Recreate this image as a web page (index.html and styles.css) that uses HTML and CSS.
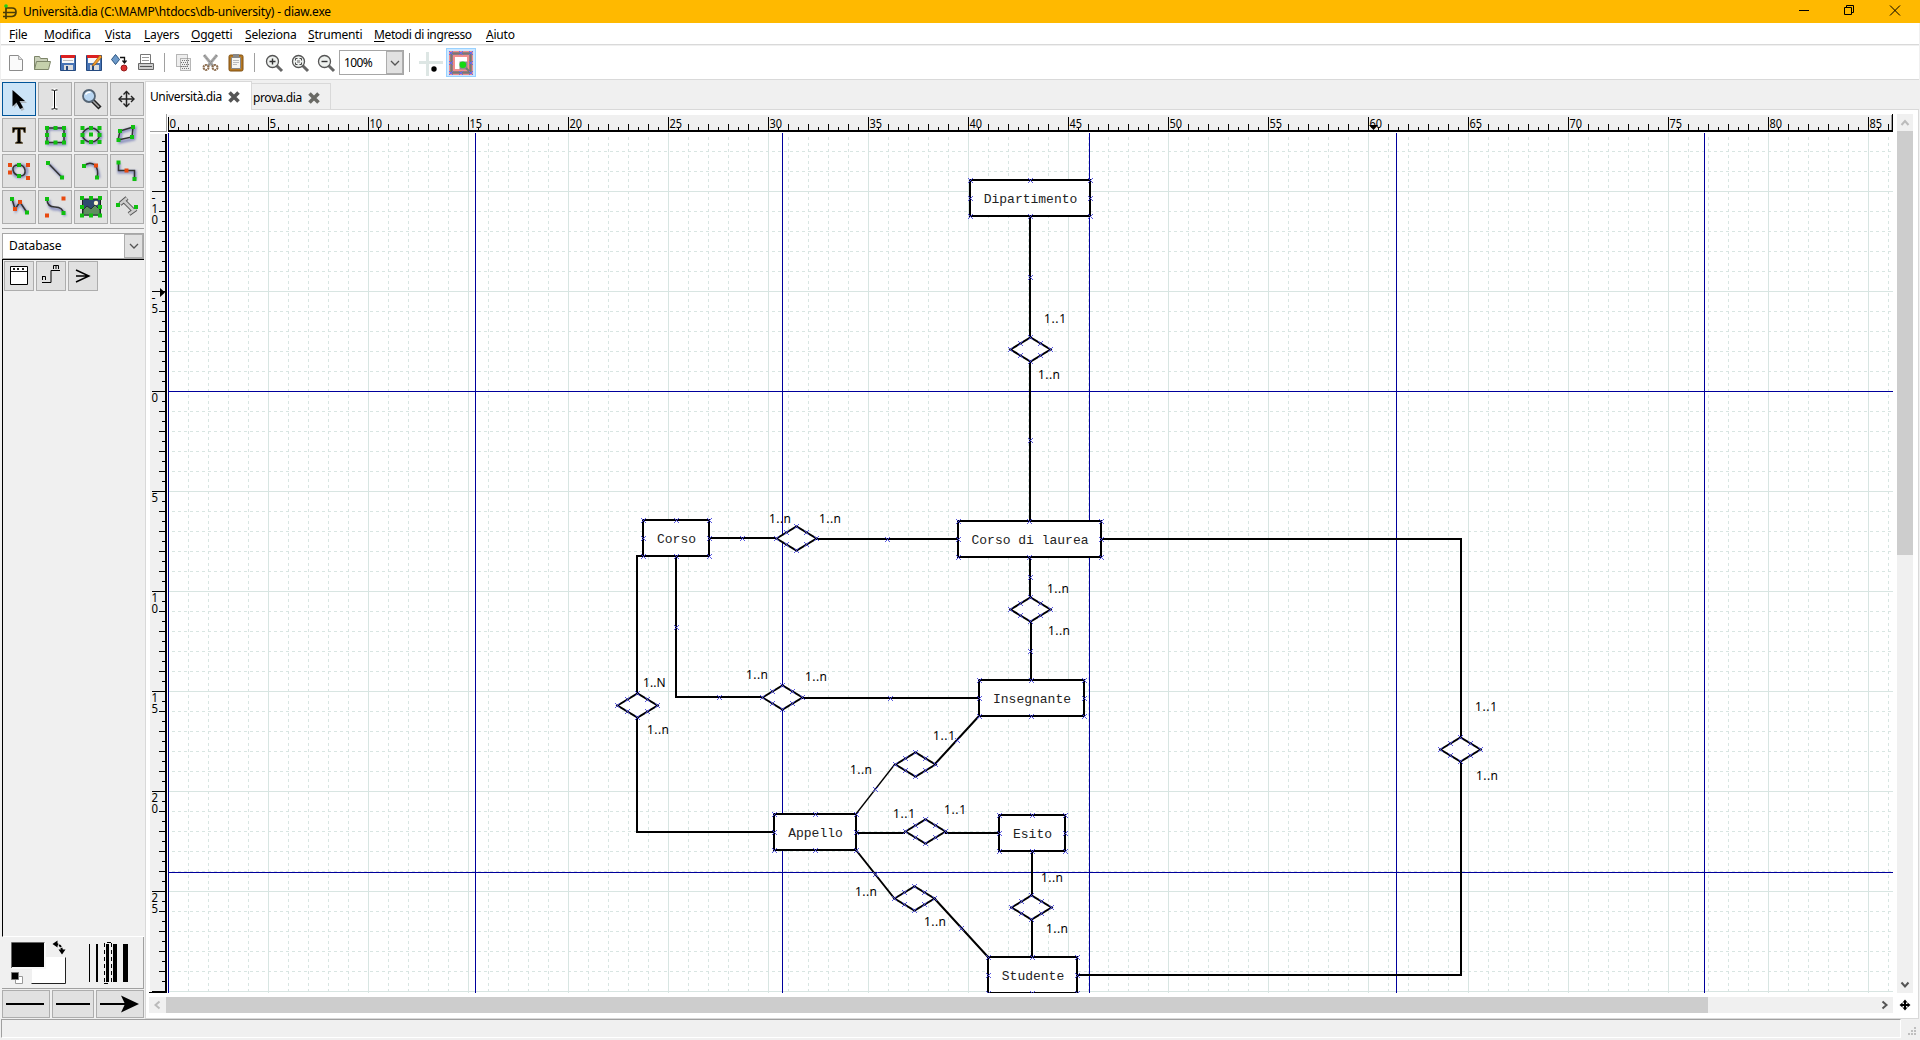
FILE: index.html
```
<!DOCTYPE html>
<html lang="it">
<head>
<meta charset="utf-8">
<title>Università.dia - diaw.exe</title>
<link rel="stylesheet" href="styles.css">
</head>
<body>
<header class="titlebar">
  <svg class="app-icon" width="16" height="16" viewBox="0 0 16 16"><path d="M4 3v12M1 12.500h9q4-.5 4-4.500t-4-4H4M1 8.500h13" fill="none" stroke="#4a3c06" stroke-width="1.700"/><circle cx="4" cy="2" r="1.800" fill="#1bd01b"/></svg>
  <span class="title-text">Università.dia (C:\MAMP\htdocs\db-university) - diaw.exe</span>
  <svg class="win-buttons" width="110" height="23" viewBox="1796 0 110 23" fill="none" stroke="#000"><path d="M1799 10.500h10M1844.500 7.500h7v7h-7zM1846.500 7v-1.500h7v7h-1.500M1890 5.500l10 10M1900 5.500l-10 10"/></svg>
</header>

<nav class="menubar">
  <span class="m-file"><u>F</u>ile</span><span class="m-mod"><u>M</u>odifica</span><span class="m-vista"><u>V</u>ista</span><span class="m-layers"><u>L</u>ayers</span><span class="m-ogg"><u>O</u>ggetti</span><span class="m-sel"><u>S</u>eleziona</span><span class="m-str"><u>S</u>trumenti</span><span class="m-met"><u>M</u>etodi di ingresso</span><span><u>A</u>iuto</span>
</nav>

<div class="toolbar">
  <svg class="tb" viewBox="0 0 26 26"><path d="M6.500 5.500h9l4 4v11h-13z" fill="#fafafa" stroke="#8c8c8c"/><path d="M15.500 5.500v4h4" fill="#ddd" stroke="#aaa"/></svg>
  <svg class="tb" viewBox="0 0 26 26"><path d="M5.500 19.500v-13h5l1 2h7v4" fill="#c8cfb8" stroke="#7d8569"/><path d="M5.500 19.500l2-8h14l-2 8z" fill="#c5d0ac" stroke="#7d8569"/></svg>
  <svg class="tb" viewBox="0 0 26 26"><path d="M5.500 5.500h15v15h-15z" fill="#4774b5" stroke="#24497f"/><path d="M6 5h14v3H6z" fill="#dc2020"/><path d="M7 8h12v5H7z" fill="#f8f8f8"/><path d="M8 10.500h10" stroke="#bbb"/><path d="M9 15h9v5H9z" fill="#ddd"/><path d="M11 16h2v4h-2z" fill="#24497f"/></svg>
  <svg class="tb" viewBox="0 0 26 26"><path d="M5.500 5.500h15v15h-15z" fill="#4774b5" stroke="#24497f"/><path d="M6 5h14v3H6z" fill="#dc2020"/><path d="M7 8h12v5H7z" fill="#f8f8f8"/><path d="M9 15h9v5H9z" fill="#ddd"/><path d="M11 16h2v4h-2z" fill="#24497f"/><path d="M12 14l7-9 2 2-7 8-3 1z" fill="#f39b28" stroke="#8a5518" stroke-width=".7"/></svg>
  <svg class="tb" viewBox="0 0 26 26"><path d="M8.500 4.500l4 5-4 5-4-5z" fill="#6c99c9" stroke="#28527f"/><path d="M13 7.500h4.500V12M15.500 10.500l2 2.500 2-2.500" fill="none" stroke="#111" stroke-width="1.300"/><circle cx="17" cy="18" r="3" fill="#dc3030" stroke="#961c1c"/></svg>
  <svg class="tb" viewBox="0 0 26 26"><path d="M7.500 4.500h10v9h-10z" fill="#fff" stroke="#777"/><path d="M9 7.500h7M9 10.500h7" stroke="#999"/><path d="M5.500 13.500h15v6h-15z" fill="#ccc" stroke="#666"/><path d="M7 16.500h12" stroke="#555"/></svg>
  <i class="sep"></i>
  <svg class="tb" viewBox="0 0 26 26"><g fill="#eee" stroke="#777" stroke-dasharray="1 1"><path d="M5.500 4.500h11v12h-11zM9.500 8.500h10v12h-10z"/><path d="M11 10.500h8M10 12.500h8M11 14.500h8M10 16.500h8M11 18.500h8"/></g></svg>
  <svg class="tb" viewBox="0 0 26 26"><path d="M7 5l9 11M20 5l-9 11" stroke="#aaa" stroke-width="3"/><path d="M7 5l9 11M20 5l-9 11" stroke="#777" stroke-dasharray="1 1"/><g fill="none" stroke="#8b6b4c" stroke-width="2" stroke-dasharray="2 .6"><circle cx="9" cy="17.500" r="2.500"/><circle cx="18" cy="17.500" r="2.500"/></g></svg>
  <svg class="tb" viewBox="0 0 26 26"><rect x="6" y="5" width="14" height="16" rx="1.500" fill="#b67820" stroke="#7e4f12"/><path d="M8.500 7.500h9v11h-9z" fill="#f6f6f2" stroke="#888"/><path d="M10 4h6v4h-6z" fill="#888"/><path d="M10 10.500h6M10 12.500h6M10 14.500h4" stroke="#bbb"/></svg>
  <i class="sep"></i>
  <svg class="tb" viewBox="0 0 26 26"><path d="M15 15l6 6" stroke="#666" stroke-width="3"/><circle cx="11.500" cy="11.500" r="6" fill="#eef1ef" stroke="#555" stroke-width="1.300"/><path d="M8.500 11.500h6M11.500 8.500v6" stroke="#333" stroke-width="1.400"/></svg>
  <svg class="tb" viewBox="0 0 26 26"><path d="M15 15l6 6" stroke="#666" stroke-width="3"/><circle cx="11.500" cy="11.500" r="6" fill="#eef1ef" stroke="#555" stroke-width="1.300"/><path d="M8.500 10.500v-2h2M12.500 8.500h2v2M14.500 12.500v2h-2M10.500 14.500h-2v-2" fill="none" stroke="#444"/><path d="M10 10h3v3h-3z" fill="#aaa"/></svg>
  <svg class="tb" viewBox="0 0 26 26"><path d="M15 15l6 6" stroke="#666" stroke-width="3"/><circle cx="11.500" cy="11.500" r="6" fill="#eef1ef" stroke="#555" stroke-width="1.300"/><path d="M8.500 11.500h6" stroke="#333" stroke-width="1.400"/></svg>
  <div class="zoom-combo"><span>100%</span><b><svg width="10" height="6" viewBox="0 0 10 6"><path d="M1 1l4 4 4-4" fill="none" stroke="#555" stroke-width="1.300"/></svg></b></div>
  <i class="sep narrow"></i>
  <svg class="tb wide" viewBox="415 49 31 26"><path d="M419 61.500h24M427.500 51v24" stroke="#dde6e4" stroke-width="3"/><circle cx="434" cy="68" r="2.700"/></svg>
  <div class="toggle"><svg width="28" height="28" viewBox="0 0 28 28"><path d="M2 2h24v24H2z" fill="#f08e8e"/><path d="M4.500 4.500h19v19h-19z" fill="none" stroke="#777" stroke-width="2.500"/><path d="M8 8h12v12H8z" fill="#fff"/><path d="M12.500 12.500h8v8h-8z" fill="#8c8c8c"/><path d="M19 19l4 4" stroke="#777" stroke-width="2"/><circle cx="15.800" cy="15.800" r="3.300" fill="#13d913"/><path d="M2 2l4 4M6 2l-4 4M12 2l4 4M16 2l-4 4M22 2l4 4M26 2l-4 4M2 12l4 4M6 12l-4 4M22 12l4 4M26 12l-4 4M2 22l4 4M6 22l-4 4M12 22l4 4M16 22l-4 4M22 22l4 4M26 22l-4 4" stroke="#6a6ae8"/></svg></div>
</div>

<main class="main">
  <aside class="sidebar">
    <div class="tools">
      <div class="tool on"><svg viewBox="0 0 34 34"><path d="M12 9v17l4-4 3.500 7 3-1.500-3.500-6.500h6z" fill="#999" opacity=".6"/><path d="M10.500 8v16.500l4-4 3.500 6.500 3-1.500-3.500-6.500h5.500z"/></svg></div>
      <div class="tool"><svg viewBox="0 0 34 34"><path d="M16.500 8.500v17M13.500 8h6M13.500 26h6" fill="none" stroke="#fff" stroke-width="3"/><path d="M16.500 9v17M13.500 8h2l1 1 1-1h2M13.500 27h2l1-1 1 1h2" fill="none" stroke="#000"/></svg></div>
      <div class="tool"><svg viewBox="0 0 34 34"><path d="M18 18l8 8" stroke="#222" stroke-width="4.500"/><path d="M18 18l7 7" stroke="#aaa" stroke-width="1.500"/><circle cx="15" cy="14" r="6" fill="#b9d6f1" stroke="#556575" stroke-width="1.800"/><path d="M11.500 12.500q2-3 5-2" stroke="#fff" stroke-width="1.500" fill="none"/></svg></div>
      <div class="tool"><svg viewBox="0 0 34 34"><path d="M16.500 9.500v15M9 17h15" stroke="#222" stroke-width="1.500"/><path d="M13.500 12.500l3-3 3 3M13.500 21.500l3 3 3-3M12 14l-3 3 3 3M21 14l3 3-3 3" fill="none" stroke="#222" stroke-width="1.400"/></svg></div>

      <div class="tool"><svg viewBox="0 0 34 34"><path d="M10.500 9.500h13v5h-1.500l-1-3h-2.500v12l2 1v1h-7v-1l2-1v-12H13l-1 3h-1.500z" stroke="#6b5a3c" stroke-width=".8"/></svg></div>
      <div class="tool"><svg viewBox="0 0 34 34"><g class="shade"><path d="M10 11h17v15H10z"/></g><path class="ln" d="M9 10h17v14.500H9z"/><path class="hg" d="M9 10h0M17.500 10h0M26 10h0M9 17h0M26 17h0M9 24.500h0M17.500 24.500h0M26 24.500h0"/></svg></div>
      <div class="tool"><svg viewBox="0 0 34 34"><g class="shade"><ellipse cx="18" cy="18" rx="9" ry="7"/></g><ellipse class="ln" cx="17" cy="17" rx="8.500" ry="7"/><path class="hg" d="M8.500 10h0M17 10h0M25.500 10h0M8.500 17h0M17 16.500h0M25.500 17h0M8.500 24h0M17 24h0M25.500 24h0"/></svg></div>
      <div class="tool"><svg viewBox="0 0 34 34"><g class="shade"><path d="M11 14l14-4-1 11-14 3z"/></g><path class="ln" d="M10 13l13-4-1 10-14 3z"/><path class="hg" d="M10 13h0M23 9h0M22 19h0M8.500 22h0"/></svg></div>

      <div class="tool"><svg viewBox="0 0 34 34"><g class="shade"><ellipse cx="18" cy="17" rx="7" ry="6"/></g><path class="ln" d="M17 11q-7 0-6 5t7 6q6 0 5-6-1-5-6-5z"/><path class="hr" d="M8 11h0M26 11h0M8 18.500h0M26 24h0"/><path class="hg" d="M17 11h0M17 22h0"/></svg></div>
      <div class="tool"><svg viewBox="0 0 34 34"><g class="shade"><path d="M11 10l14 14"/></g><path class="ln" d="M10 9l14 14.500"/><path class="hg" d="M10 9h0M24 23.500h0"/></svg></div>
      <div class="tool"><svg viewBox="0 0 34 34"><g class="shade"><path d="M11 12q12-7 14 12"/></g><path class="ln" d="M10 12q5-5 11-1 4 5 2 12"/><path class="hg" d="M10 12h0M23 23.500h0"/><path class="hr" d="M22 11.500h0"/></svg></div>
      <div class="tool"><svg viewBox="0 0 34 34"><g class="shade"><path d="M9 9v9h16v8"/></g><path class="ln" d="M8.500 8v8.500h16V25"/><path class="hg" d="M8.500 8.500h0M24.500 25h0"/><path class="hr" d="M16.500 16.500h0"/></svg></div>

      <div class="tool"><svg viewBox="0 0 34 34"><g class="shade"><path d="M11 10l3 10 4-7 7 10"/></g><path class="ln" d="M10 9l3 10 5-7 7 10.500"/><path class="hg" d="M10 9h0M25 22.500h0"/><path class="hr" d="M13 19h0M18 12h0"/></svg></div>
      <div class="tool"><svg viewBox="0 0 34 34"><g class="shade"><path d="M11 10q-1 9 7 9t9 7"/></g><path class="ln" d="M9 9q0 8 8 8t8.500 7"/><path class="hg" d="M9 9h0M25.500 23h0"/><path class="hr" d="M25.500 8.500h0M9 25.500h0"/></svg></div>
      <div class="tool"><svg viewBox="0 0 34 34"><path d="M8.500 9h18v16h-18z" fill="#304a70" stroke="#222"/><path d="M9 20l4-4 4 3 4-4 5 5v5H9z" fill="#5f8f5f" stroke="#233"/><circle cx="22" cy="13" r="2.200" fill="#fff9cc"/><path class="hg" d="M8 8h0M17 8h0M26 8h0M8 17h0M26 17h0M8 25.500h0M17 25.500h0M26 25.500h0"/></svg></div>
      <div class="tool"><svg viewBox="0 0 34 34"><path d="M10 14l7-6M19 24l7-5M14 11l9 9" stroke="#555" stroke-width="4.500"/><path d="M10 14l7-6M19 24l7-5M14 11l9 9" stroke="#ccc" stroke-width="2.500"/><path class="hg" d="M8 15h0M26 17h0"/></svg></div>
    </div>
    <div class="sheet-combo"><span>Database</span><b><svg width="10" height="6" viewBox="0 0 10 6"><path d="M1 1l4 4 4-4" fill="none" stroke="#555" stroke-width="1.300"/></svg></b></div>
    <div class="sheet">
      <div class="obj"><svg viewBox="0 0 30 30"><path d="M6.500 5.500h17v18h-17z" fill="#fff" stroke="#000"/><path d="M6 10.500h18M9 7l2 2M11 7l-2 2M13 7l2 2M15 7l-2 2M18 7l2 2M20 7l-2 2" stroke="#000" stroke-width=".9"/></svg></div>
      <div class="obj"><svg viewBox="0 0 30 30"><path d="M6 21.500h9v-12h9M6.500 19v-4M6.500 15.500h3M9.500 15.500V19M17.500 8V4.500h5V8M20 4.500V8" fill="none" stroke="#000"/></svg></div>
      <div class="obj"><svg viewBox="0 0 30 30"><path d="M8 9l13 6-13 6M8 15h13" fill="none" stroke="#000" stroke-width="1.400"/></svg></div>
    </div>
    <div class="style-area">
      <svg width="142" height="51" viewBox="2 937 142 51">
        <path d="M32 957h33v26H32z" fill="#fff"/><path d="M65.500 957.500v26h-34" fill="none" stroke="#222"/>
        <path d="M11 942h35v27H11z" fill="#f8f8f8"/><path d="M12 943h32v24H12z"/><path d="M11.500 968v-25.500h33" fill="none" stroke="#666"/>
        <path d="M15.500 976.500h7v7h-7z" fill="#fff" stroke="#999"/><path d="M11.500 972.500h7v7h-7z" stroke="#777"/>
        <path d="M55 944q7 0 7 8" fill="none" stroke="#000" stroke-width="2" stroke-dasharray="3 1"/><path d="M52.500 944l5-3.500v7zM62 954.500l-3.500-5h7z"/>
        <path d="M89 944h1v38h-1zM96 944h2v38h-2zM106 944h3v38h-3zM113 944h4v38h-4zM123 944h5v38h-5z"/>
        <path d="M104.500 943v39M111.500 943v39M104 983.500h4M107 942.500h4" stroke="#000" stroke-dasharray="4 3"/>
      </svg>
    </div>
    <div class="line-row">
      <div class="lb l1"><svg width="46" height="26"><path d="M3 13h38" stroke="#000" stroke-width="2"/></svg></div>
      <div class="lb l2"><svg width="40" height="26"><path d="M3 13h34" stroke="#000" stroke-width="2"/></svg></div>
      <div class="lb l3"><svg width="46" height="26"><path d="M3 13h30" stroke="#000" stroke-width="2"/><path d="M24 4.500l18 8.500-18 8.500 4-8.500z"/></svg></div>
    </div>
  </aside>

  <section class="notebook">
    <div class="tabs">
      <div class="tab active"><span>Università.dia</span><svg width="12" height="12" viewBox="0 0 12 12"><path d="M1.500 1.500l9 9M10.500 1.500l-9 9" stroke="#555" stroke-width="3.600"/></svg></div>
      <div class="tab"><span>prova.dia</span><svg width="12" height="12" viewBox="0 0 12 12"><path d="M1.500 1.500l9 9M10.500 1.500l-9 9" stroke="#6a6a65" stroke-width="3.600"/></svg></div>
      <div class="tab-fill"></div>
    </div>
    <div class="page">
      <svg id="board" class="board" width="1744" height="879" viewBox="149 114 1744 879"></svg>
      <div class="vscroll">
        <svg width="16" height="17" viewBox="0 0 16 17"><path d="M4.500 11l3.500-4 3.500 4" fill="none" stroke="#bbb" stroke-width="2"/></svg>
        <div class="vthumb"></div><div class="grow"></div>
        <svg width="16" height="17" viewBox="0 0 16 17"><path d="M4.500 6.500l3.500 4 3.500-4" fill="none" stroke="#555" stroke-width="2"/></svg>
      </div>
      <div class="hscroll">
        <svg width="17" height="16" viewBox="0 0 17 16"><path d="M10.500 4.500l-4 3.500 4 3.500" fill="none" stroke="#bbb" stroke-width="2"/></svg>
        <div class="hthumb"></div><div class="grow"></div>
        <svg width="17" height="16" viewBox="0 0 17 16"><path d="M6.500 4.500l4 3.500-4 3.500" fill="none" stroke="#555" stroke-width="2"/></svg>
      </div>
      <svg class="nav" width="16" height="16" viewBox="0 0 16 16"><path d="M8 4v8M4 8h8" stroke="#000" stroke-width="2"/><path d="M8 2.500l2.500 3h-5zM8 13.500l2.500-3h-5zM2.500 8l3-2.500v5zM13.500 8l-3-2.500v5z"/></svg>
    </div>
  </section>
</main>

<footer class="status"><div class="status-box"></div><svg width="12" height="12" viewBox="0 0 12 12" fill="#bfbfbf"><path d="M7 1h2v2H7zM4 4h2v2H4zM7 4h2v2H7zM1 7h2v2H1zM4 7h2v2H4zM7 7h2v2H7z"/></svg></footer>
<script src="diagram.js"></script>
</body>
</html>
```
FILE: styles.css
```
* { box-sizing: border-box; }
html { height: 1040px; overflow: hidden; }
body { margin: 0; width: 1920px; height: 1040px; overflow: hidden; display: flex; flex-direction: column; background: #f0f0f0; color: #000; font: 12px/16px "Noto Sans", "Open Sans", sans-serif; }
svg { display: block; flex: none; }
span { white-space: nowrap; }

.titlebar { height: 23px; flex: none; display: flex; align-items: center; background: #ffb900; padding: 0 14px 0 2px; }
.app-icon { margin-right: 5px; }
.title-text { letter-spacing: -.2px; flex: 1; padding-top: 1px; }

.menubar { height: 22px; flex: none; display: flex; align-items: center; background: #fff; border-bottom: 1px solid #d9d9d9; margin: 0 1px; padding: 2px 0 0 8px; letter-spacing: -.2px; }
.menubar u { text-underline-offset: 2px; }
.m-file { width: 35px; }
.m-mod { width: 61px; }
.m-vista { width: 39px; }
.m-layers { width: 47px; }
.m-ogg { width: 54px; }
.m-sel { width: 63px; }
.m-str { width: 66px; }
.m-met { width: 112px; letter-spacing: -.38px; }

.toolbar { height: 35px; flex: none; display: flex; align-items: center; background: #fff; border-top: 1px solid #f0f0f0; border-bottom: 1px solid #d9d9d9; margin: 0 1px; padding-left: 2px; }
.tb { width: 26px; height: 26px; }
.tb.wide { width: 31px; }
.sep { flex: none; width: 1px; height: 19px; background: #a0a0a0; margin: 0 6px 0 5px; }
.sep.narrow { margin: 0 5px; }
.zoom-combo { width: 65px; height: 25px; border: 1px solid #a6a6a6; display: flex; align-items: center; padding-left: 4px; letter-spacing: -.6px; }
.zoom-combo span { flex: 1; }
.zoom-combo b, .sheet-combo b { width: 17px; height: 23px; background: #e1e1e1; border: 1px solid #adadad; display: flex; align-items: center; justify-content: center; }
.toggle { width: 30px; height: 29px; background: #cce8ff; border: 1px solid #99d1ff; }

.main { flex: 1; display: flex; min-height: 0; }
.sidebar { width: 145px; flex: none; padding: 2px 1px 1px 2px; display: flex; flex-direction: column; }
.tools { display: grid; grid-template-columns: repeat(4, 34px); gap: 2px; padding-bottom: 4px; height: 147px; border-bottom: 1px solid #a0a0a0; }
.tool { height: 34px; background: #e1e1e1; border: 1px solid #adadad; }
.tool svg { width: 34px; height: 34px; margin: -1px; }
.tool.on { background: #cce4f7; border-color: #005499; }
.shade { fill: none; stroke: #7078b4; stroke-width: 3px; opacity: .75; filter: blur(.8px); }
.ln { fill: none; stroke: #333; stroke-width: 1.5px; }
.hg, .hr { fill: none; stroke: #10c010; stroke-linecap: square; stroke-width: 4px; }
.hr { stroke: #e84a10; }

.sheet-combo { height: 26px; margin-top: 4px; background: #fff; border: 1px solid #a6a6a6; display: flex; align-items: center; padding-left: 6px; letter-spacing: -.1px; }
.sheet-combo span { flex: 1; }
.sheet-combo b { width: 19px; height: 24px; }
.sheet { flex: 1; border-top: 1px solid #000; border-left: 1px solid #000; border-bottom: 1px solid #fff; padding: 1px 0 0 1px; display: flex; gap: 2px; }
.obj { width: 30px; height: 30px; background: #e1e1e1; border: 1px solid #adadad; }
.obj svg { width: 30px; height: 30px; margin: -1px; }
.style-area { height: 52px; border-right: 1px solid #a0a0a0; border-bottom: 1px solid #a0a0a0; }
.line-row { height: 29px; padding-top: 1px; display: flex; gap: 2px; }
.lb { height: 28px; background: #e1e1e1; border: 1px solid #adadad; }
.l1 { width: 48px; }
.l2 { width: 42px; }
.l3 { width: 48px; }

.notebook { flex: 1; display: flex; flex-direction: column; padding-right: 1px; }
.tabs { height: 30px; display: flex; align-items: flex-end; }
.tab { height: 27px; width: 79px; border: 1px solid #d9d9d9; border-left: 0; display: flex; align-items: center; gap: 6px; padding: 2px 0 0 1px; letter-spacing: -.4px; }
.tab.active { height: 29px; width: 107px; background: #fff; border: 1px solid #d9d9d9; border-bottom: 0; padding: 1px 0 0 4px; letter-spacing: -.4px; }
.tab-fill { flex: 1; border-bottom: 1px solid #d9d9d9; }
.page { flex: 1; background: #fff; border: 1px solid #d9d9d9; border-top: 0; display: grid; grid-template-columns: 1744px 16px; grid-template-rows: 879px 16px; gap: 4px; padding: 4px 0 0 3px; }
.board { background: #fff; }
.vscroll, .hscroll { background: #f0f0f0; display: flex; }
.vscroll { flex-direction: column; }
.vthumb { height: 424px; background: #cdcdcd; }
.hthumb { width: 1542px; background: #cdcdcd; }
.grow { flex: 1; }

.ruler-num { font: 12px "Noto Sans", sans-serif; }
.entity-name { font: 13px "Liberation Mono", monospace; text-anchor: middle; fill: #222; }
.card { font: 12px "Noto Sans", sans-serif; }

.status { height: 21px; flex: none; display: flex; align-items: flex-end; gap: 6px; padding: 0 0 2px 1px; }
.status-box { width: 1900px; height: 19px; border: 1px solid #fff; border-top-color: #a0a0a0; border-left-color: #a0a0a0; }
```
FILE: diagram.js
```
// Draws the rulers, the grid, the page guides and the ER diagram.
(function () {
  const out = [];
  const L = 168, T = 133, R = 1893, B = 993;
  const path = (d, stroke, w, extra) =>
    out.push(`<path d="${d}" fill="none" stroke="${stroke}" stroke-width="${w}" ${extra || ''}/>`);

  // grid
  let solid = '', dash = '';
  for (let x = L + 20, i = 1; x < R; x += 20, i++) {
    if (i % 5) dash += `M${x + .5} 137V${B}`; else solid += `M${x + .5} ${T}V${B}`;
  }
  for (let y = 151, i = 3; y < B; y += 20, i++) {
    if (i % 5) dash += `M172 ${y + .5}H${R}`; else solid += `M${L} ${y + .5}H${R}`;
  }
  path(dash, '#d8e5e2', 1, 'stroke-dasharray="3 3"');
  path(solid, '#d8e5e2', 1);

  // page guides
  let g = '';
  [168, 475, 782, 1089, 1396, 1704].forEach(x => g += `M${x + .5} ${T}V${B}`);
  [391, 872].forEach(y => g += `M${L} ${y + .5}H${R}`);
  path(g, '#00009c', 1);

  // rulers
  out.push('<path d="M168 115H1891V130H168zM150 134H165V992H150z" fill="#f0f0f0"/>');
  let t = '';
  for (let x = L, i = 0; x < 1891; x += 10, i++)
    t += `M${x + .5} ${i % 10 === 0 ? 117 : i % 2 === 0 ? 124 : 127}V130`;
  for (let y = 141, i = 5; y < 992; y += 10, i++)
    t += `M${i % 10 === 0 ? 152 : i % 2 === 0 ? 159 : 162} ${y + .5}H165`;
  path(t, '#000', 1);
  path('M168 131H1893M166 134V993', '#000', 2);
  path('M1892.5 114V132M149 992.5H167', '#000', 1);
  path('M166.5 114V132M150 131.5H167M1891.5 115V130', '#a0a0a0', 1);
  out.push('<path d="M1369 125H1378L1373.500 130zM160 288V297L165 292.500z"/>');
  for (let n = 0; n <= 85; n += 5)
    out.push(`<text class="ruler-num" x="${L + 1.500 + n * 20}" y="128" textLength="${n > 9 ? 12.500 : 6.500}" lengthAdjust="spacingAndGlyphs">${n}</text>`);
  for (let n = -10; n <= 25; n += 5)
    [...String(n)].forEach((c, k) =>
      out.push(`<text class="ruler-num" x="151.500" y="${391 + n * 20 + 11 * (k + 1)}" textLength="${c === '-' ? 4 : 6.500}" lengthAdjust="spacingAndGlyphs">${c}</text>`));

  let marks = '';
  const cross = (x, y) => {
    x = Math.floor(x) + .5; y = Math.floor(y) + .5;
    marks += `M${x - 2.500} ${y - 2.500}l5 5M${x + 2.500} ${y - 2.500}l-5 5`;
  };

  // connectors
  path('M1030 216V337M1030 361V521M1030 557V597M1031 621V680M709 538H776M816 539H958' +
    'M1101 539H1461V737M1461 761V975H1077M643 556H637V693M637 717V832H774M676 556V697H762' +
    'M802 698H979M979 716L935 764M856 833H905M945 833H999M856 850L894 898M934 898L988 957' +
    'M1032 851V895M1032 919V957', '#000', 2);
  path('M895 764L856 814', '#000', 1.3);
  [[1030, 277], [1030, 440], [742, 538], [887, 539], [1030, 577], [1030, 651], [676, 627],
   [719, 697], [890, 698], [957, 740], [875, 789], [875, 874], [961, 928]].forEach(p => cross(...p));

  // entities
  [['Dipartimento', 970, 180, 120, 93.600], ['Corso', 643, 520, 66, 39], ['Corso di laurea', 958, 521, 143, 117],
   ['Insegnante', 979, 680, 105, 78], ['Appello', 774, 814, 82, 54.600], ['Esito', 999, 815, 66, 39],
   ['Studente', 988, 957, 89, 62.400]].forEach(([name, x, y, w, tw]) => {
    out.push(`<rect x="${x}" y="${y}" width="${w}" height="36" fill="#fff" stroke="#000" stroke-width="2"/>`);
    out.push(`<text class="entity-name" x="${x + w / 2 + .5}" y="${y + 23}" textLength="${tw}">${name}</text>`);
    [0, .5, 1].forEach(a => [0, .5, 1].forEach(b => { if (a !== .5 || b !== .5) cross(x + a * w, y + b * 36); }));
  });

  // relationships
  [[1030, 349], [796, 538], [1030, 609], [782, 697], [637, 705], [915, 764], [925, 831],
   [914, 898], [1031, 907], [1460, 749]].forEach(([x, y]) => {
    const cx = x + .5, cy = y + .5;
    out.push(`<path d="M${cx - 20} ${cy}L${cx} ${cy - 12}L${cx + 20} ${cy}L${cx} ${cy + 12}z" fill="#fff" stroke="#000" stroke-width="2"/>`);
    [[-20, 0], [20, 0], [0, -12], [0, 12], [-10, -6], [10, -6], [-10, 6], [10, 6]].forEach(([a, b]) => cross(x + a, y + b));
  });
  path(marks, '#4646dc', .9);

  // cardinalities
  [['1..1', 1044, 323], ['1..n', 1038, 379], ['1..n', 769, 523], ['1..n', 819, 523], ['1..n', 1047, 593],
   ['1..n', 1048, 635], ['1..n', 746, 679], ['1..n', 805, 681], ['1..N', 643, 687], ['1..n', 647, 734],
   ['1..1', 933, 740], ['1..n', 850, 774], ['1..1', 893, 818], ['1..1', 944, 814], ['1..n', 855, 896],
   ['1..n', 924, 926], ['1..n', 1041, 882], ['1..n', 1046, 933], ['1..1', 1475, 711], ['1..n', 1476, 780]]
    .forEach(([s, x, y]) => out.push(`<text class="card" x="${x}" y="${y}" textLength="${s === '1..N' ? 22.500 : 22}">${s}</text>`));

  document.getElementById('board').innerHTML = out.join('');
})();
```
